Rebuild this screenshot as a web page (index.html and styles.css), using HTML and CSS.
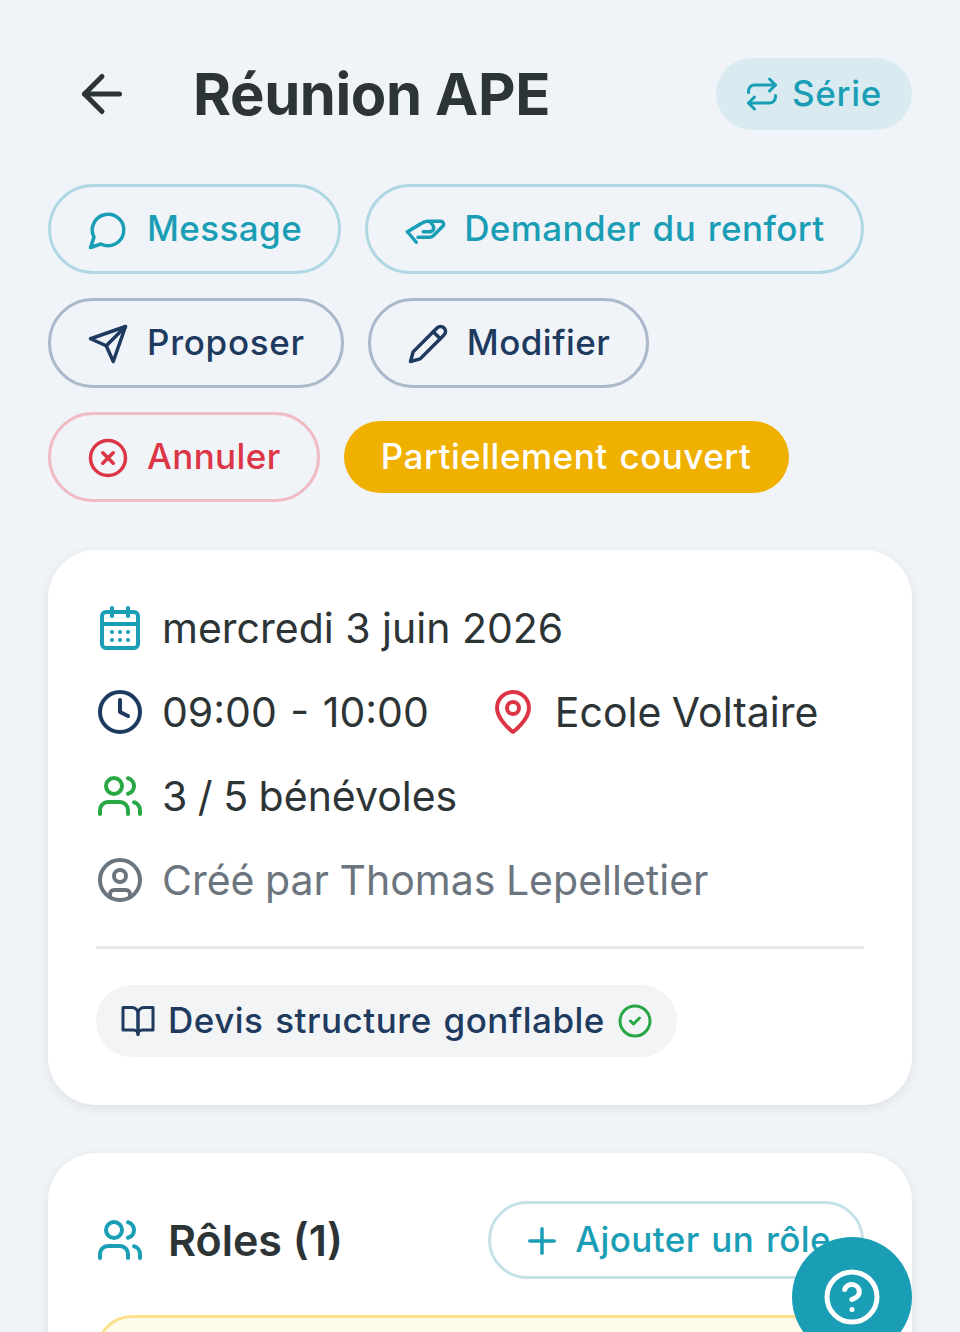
FILE: index.html
```html
<!DOCTYPE html>
<html lang="fr">
<head>
  <meta charset="UTF-8">
  <title>Réunion APE</title>
  <link rel="stylesheet" href="styles.css">
</head>
<body>
  <header class="top-bar">
    <button class="back-btn" aria-label="Retour">
      <svg class="icon" viewBox="0 0 24 24"><path d="m12 19-7-7 7-7"/><path d="M19 12H5"/></svg>
    </button>
    <h1>Réunion APE</h1>
    <span class="series-pill">
      <svg class="icon" viewBox="0 0 24 24"><path d="m17 2 4 4-4 4"/><path d="M3 11v-1a4 4 0 0 1 4-4h14"/><path d="m7 22-4-4 4-4"/><path d="M21 13v1a4 4 0 0 1-4 4H3"/></svg>
      Série
    </span>
  </header>

  <div class="actions">
    <button class="chip teal">
      <svg class="icon" viewBox="0 0 24 24"><path d="M7.9 20A9 9 0 1 0 4 16.1L2 22Z"/></svg>
      Message
    </button>
    <button class="chip teal">
      <svg class="icon" viewBox="0 0 24 24"><path d="M2 13l7.500-4.500C11 7.500 12 7 13.500 7H21a1.700 1.700 0 0 1 1 3l-5 5c-.7.7-1.600 1.200-2.500 1.200H8"/><path d="M2 13l5 6"/><path d="M11 13h3.500c1.500 0 2.500-1 2.500-2.200S16 8.500 15 7.500"/></svg>
      Demander du renfort
    </button>
    <button class="chip navy">
      <svg class="icon" viewBox="0 0 24 24"><path d="m22 2-7 20-4-9-9-4Z"/><path d="M22 2 11 13"/></svg>
      Proposer
    </button>
    <button class="chip navy edit">
      <svg class="icon" viewBox="0 0 24 24"><path d="M17 3a2.850 2.830 0 1 1 4 4L7.500 20.500 2 22l1.500-5.500Z"/><path d="m15 5 4 4"/></svg>
      Modifier
    </button>
    <button class="chip red">
      <svg class="icon" viewBox="0 0 24 24"><circle cx="12" cy="12" r="10"/><path d="m15 9-6 6"/><path d="m9 9 6 6"/></svg>
      Annuler
    </button>
    <span class="status">Partiellement couvert</span>
  </div>

  <section class="card">
    <div class="info-row">
      <svg class="icon row-icon c-teal" viewBox="0 0 24 24"><path d="M8 2v4"/><path d="M16 2v4"/><rect x="3" y="4" width="18" height="18" rx="2"/><path d="M3 10h18"/><path d="M8 14h.01"/><path d="M12 14h.01"/><path d="M16 14h.01"/><path d="M8 18h.01"/><path d="M12 18h.01"/><path d="M16 18h.01"/></svg>
      <span class="date">mercredi 3 juin 2026</span>
    </div>
    <div class="info-row">
      <svg class="icon row-icon c-navy" viewBox="0 0 24 24"><circle cx="12" cy="12" r="10"/><path d="M12 6v6l4 2"/></svg>
      <span class="time">09:00 - 10:00</span>
      <svg class="icon row-icon c-red place-icon" viewBox="0 0 24 24"><path d="M20 10c0 6-8 12-8 12s-8-6-8-12a8 8 0 0 1 16 0Z"/><circle cx="12" cy="10" r="3"/></svg>
      <span>Ecole Voltaire</span>
    </div>
    <div class="info-row">
      <svg class="icon row-icon c-green" viewBox="0 0 24 24"><path d="M16 21v-2a4 4 0 0 0-4-4H6a4 4 0 0 0-4 4v2"/><circle cx="9" cy="7" r="4"/><path d="M22 21v-2a4 4 0 0 0-3-3.870"/><path d="M16 3.130a4 4 0 0 1 0 7.750"/></svg>
      <span>3 / 5 bénévoles</span>
    </div>
    <div class="info-row muted">
      <svg class="icon row-icon" viewBox="0 0 24 24"><circle cx="12" cy="12" r="10"/><circle cx="12" cy="10" r="3"/><path d="M7 20.662V19a2 2 0 0 1 2-2h6a2 2 0 0 1 2 2v1.662"/></svg>
      <span>Créé par Thomas Lepelletier</span>
    </div>
    <hr class="divider">
    <span class="doc-chip">
      <svg class="icon" viewBox="0 0 24 24"><path d="M2 3h6a4 4 0 0 1 4 4v14a3 3 0 0 0-3-3H2z"/><path d="M22 3h-6a4 4 0 0 0-4 4v14a3 3 0 0 1 3-3h7z"/></svg>
      Devis structure gonflable
      <svg class="icon c-green" viewBox="0 0 24 24"><circle cx="12" cy="12" r="10"/><path d="m9 12 2 2 4-4"/></svg>
    </span>
  </section>

  <section class="card roles">
    <div class="roles-head">
      <svg class="icon row-icon c-teal" viewBox="0 0 24 24"><path d="M16 21v-2a4 4 0 0 0-4-4H6a4 4 0 0 0-4 4v2"/><circle cx="9" cy="7" r="4"/><path d="M22 21v-2a4 4 0 0 0-3-3.870"/><path d="M16 3.130a4 4 0 0 1 0 7.750"/></svg>
      <h2>Rôles (1)</h2>
      <button class="add-role">
        <svg class="icon" viewBox="0 0 24 24"><path d="M5 12h14"/><path d="M12 5v14"/></svg>
        Ajouter un rôle
      </button>
    </div>
    <div class="role-box"></div>
  </section>

  <button class="help-fab" aria-label="Aide">
    <svg class="icon" viewBox="0 0 24 24"><circle cx="12" cy="12" r="10"/><path d="M9.090 9a3 3 0 0 1 5.830 1c0 2-3 3-3 3"/><path d="M12 17h.01"/></svg>
  </button>
</body>
</html>
```

FILE: styles.css
```css
html, body {
  height: 1332px;
  overflow: hidden;
}

body {
  margin: 0;
  padding: 58px 48px 0;
  box-sizing: border-box;
  position: relative;
  background: #f0f4f8;
  font-family: Inter, "Liberation Sans", sans-serif;
  color: #2d3436;
}

button {
  font-family: inherit;
  background: none;
  cursor: pointer;
}

.icon {
  fill: none;
  stroke: currentColor;
  stroke-width: 2;
  stroke-linecap: round;
  stroke-linejoin: round;
  flex: none;
}

.c-teal { color: #1a9eb5; }
.c-navy { color: #1e3a5f; }
.c-red { color: #dc3545; }
.c-green { color: #28a745; }

.top-bar {
  display: flex;
  align-items: center;
  height: 72px;
  margin-bottom: 54px;
}

.back-btn {
  border: none;
  padding: 0 24px;
  display: flex;
  color: #2d3436;
}

.back-btn .icon {
  width: 60px;
  height: 60px;
}

h1 {
  margin: 0 0 0 37px;
  font-size: 58px;
  font-weight: 700;
  letter-spacing: -0.4px;
  flex: 1;
}

/* text sits a pixel above the icon centre in all the pills */
.series-pill, .doc-chip {
  padding-bottom: 2px;
}

.series-pill .icon, .doc-chip .icon {
  margin-top: 2px;
}

.chip, .add-role {
  padding-bottom: 3px;
}

.chip .icon, .add-role .icon {
  margin-top: 3px;
}

.series-pill {
  display: flex;
  align-items: center;
  gap: 12px;
  height: 72px;
  box-sizing: border-box;
  padding-left: 28px;
  padding-right: 30px;
  border-radius: 36px;
  background: #d9ebf1;
  color: #1a9eb5;
  font-size: 35px;
  font-weight: 500;
  letter-spacing: 0.7px;
}

.series-pill .icon {
  width: 36px;
  height: 36px;
}

.actions {
  display: flex;
  flex-wrap: wrap;
  align-items: center;
  gap: 24px;
  margin-bottom: 48px;
  width: 840px;
}

.chip {
  display: flex;
  align-items: center;
  gap: 18px;
  height: 90px;
  padding-left: 36px;
  padding-right: 36px;
  border: 3px solid;
  border-radius: 45px;
  font-size: 35px;
  font-weight: 500;
  letter-spacing: 0.4px;
  word-spacing: 2px;
}

.chip .icon {
  width: 42px;
  height: 42px;
}

.chip.teal { color: #1a9eb5; border-color: #afd8e2; }
.chip.navy { color: #1e3a5f; border-color: #adb9ca; letter-spacing: 0.7px; }
.chip.navy.edit { letter-spacing: 0.45px; }
.chip.red { color: #dc3545; border-color: #f0bcc4; }

.status {
  height: 72px;
  line-height: 70px;
  padding: 0 38px 0 37px;
  border-radius: 36px;
  background: #f0b000;
  color: #fff;
  font-size: 35px;
  font-weight: 500;
  letter-spacing: 0.5px;
  word-spacing: 2px;
}

.card {
  background: #fff;
  border-radius: 48px;
  padding: 48px;
  margin-bottom: 48px;
  box-shadow: 0 3px 12px rgba(0, 0, 0, 0.08);
}

.info-row {
  display: flex;
  align-items: center;
  gap: 18px;
  height: 60px;
  margin-bottom: 24px;
  font-size: 41px;
  word-spacing: -1px;
}

.date {
  word-spacing: 0;
}

.time {
  word-spacing: 2px;
}

.row-icon {
  width: 48px;
  height: 48px;
}

.place-icon {
  margin-left: 42px;
}

.muted {
  color: #6c757d;
  margin-bottom: 0;
}

.divider {
  border: none;
  height: 3px;
  background: #e6e9ec;
  margin: 36px 0;
}

.doc-chip {
  display: inline-flex;
  align-items: center;
  gap: 12px;
  height: 72px;
  box-sizing: border-box;
  padding-left: 24px;
  padding-right: 24px;
  border-radius: 36px;
  background: #f2f4f6;
  color: #1e3a5f;
  font-size: 35px;
  font-weight: 500;
  letter-spacing: 0.5px;
  word-spacing: 2px;
}

.doc-chip .icon {
  width: 36px;
  height: 36px;
}

.roles-head {
  display: flex;
  align-items: center;
  gap: 24px;
  margin-bottom: 36px;
}

h2 {
  margin: 0;
  font-size: 43px;
  font-weight: 600;
  flex: 1;
}

.add-role {
  display: flex;
  align-items: center;
  gap: 12px;
  height: 78px;
  padding-left: 30px;
  padding-right: 30px;
  border: 3px solid #c5e2e9;
  border-radius: 39px;
  color: #1a9eb5;
  font-size: 35px;
  font-weight: 500;
  letter-spacing: 0.4px;
  word-spacing: 2px;
}

.add-role .icon {
  width: 42px;
  height: 42px;
}

.role-box {
  height: 120px;
  border: 3px solid #fde08a;
  border-radius: 36px;
  background: #fffbeb;
}

.help-fab {
  position: absolute;
  left: 792px;
  top: 1237px;
  width: 120px;
  height: 120px;
  padding: 0;
  border: none;
  border-radius: 50%;
  background: #1a9eb5;
  color: #fff;
  display: flex;
  align-items: center;
  justify-content: center;
}

.help-fab .icon {
  width: 60px;
  height: 60px;
}
```
